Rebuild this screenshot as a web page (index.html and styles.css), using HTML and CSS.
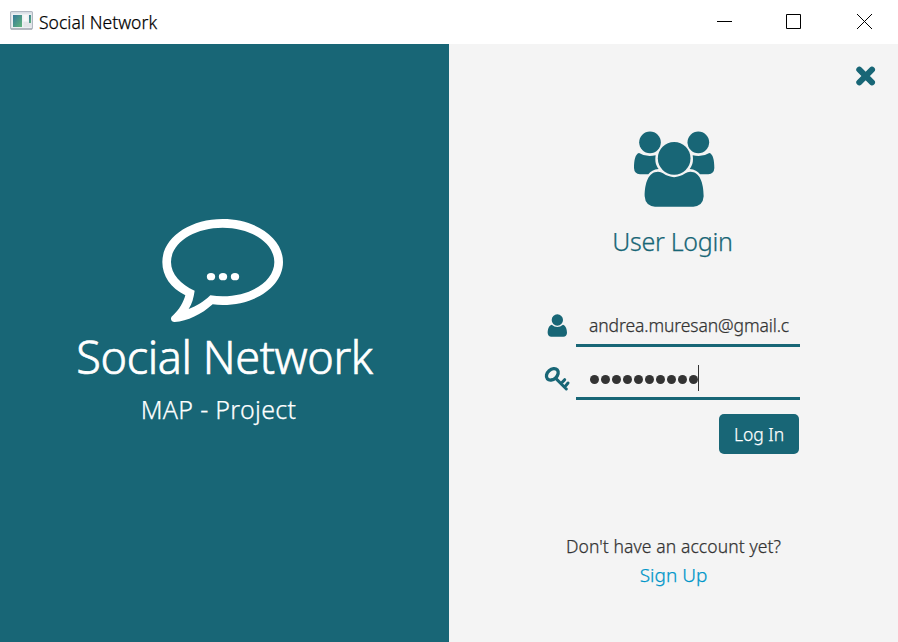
FILE: index.html
```html
<!DOCTYPE html>
<html lang="en">
<head>
<meta charset="utf-8">
<title>Social Network</title>
<link rel="stylesheet" href="styles.css">
</head>
<body>
<header class="titlebar">
  <svg class="app-icon" viewBox="0 0 23 19">
    <defs><linearGradient id="g" x1="0" y1="0" x2="1" y2="1"><stop offset="0" stop-color="#35789a"/><stop offset="1" stop-color="#62b57b"/></linearGradient></defs>
    <rect x=".6" y=".6" width="21.800" height="17.400" rx="1" fill="#edf0f3" stroke="#b2b8c2" stroke-width="1.200"/>
    <path d="M1 18h21" stroke="#9299a2"/>
    <path d="M1.500 2h20" stroke="#d3d9e2"/>
    <rect x="3" y="4" width="9" height="12" fill="url(#g)"/>
    <rect x="13.500" y="4" width="4" height="6" fill="#f8f8f8"/>
    <rect x="13.500" y="11" width="7.500" height="5" fill="#e3e5e8"/>
    <rect x="19" y="4" width="2" height="8" fill="url(#g)"/>
  </svg>
  <span class="window-title">Social Network</span>
  <svg class="controls" viewBox="0 0 198 44" fill="none" stroke="#000">
    <path d="M17 21.500h15M86.500 14.500h14v14h-14z"/>
    <path d="M157 14l15 15M172 14l-15 15"/>
  </svg>
</header>
<main class="content">
  <section class="brand">
    <svg class="bubble" viewBox="0 0 450 360" fill="#fff">
      <path fill-rule="evenodd" d="M218 27C318 27 399 84 399 156C399 228 318 285 218 285Q202 285 188 283C155 313 112 334 74 336C62 336 60 324 67 318C88 300 101 275 106 256C62 234 37 198 37 156C37 84 118 27 218 27ZM218 53C132 53 63 99 63 156C63 192 92 224 134 242C131 263 126 282 116 297C140 288 160 276 181 256C194 258 206 259 218 259C304 259 373 213 373 156C373 99 304 53 218 53Z"/>
      <ellipse cx="183" cy="200" rx="12.500" ry="11"/><ellipse cx="219" cy="200" rx="12.500" ry="11"/><ellipse cx="255" cy="200" rx="12.500" ry="11"/>
    </svg>
    <h1 class="name">Social Network</h1>
    <p class="subtitle">MAP - Project</p>
  </section>
  <section class="login">
    <svg class="close" viewBox="0 0 66 66"><path d="M14 15L50 51M50 15L14 51" stroke="#186676" stroke-width="14" stroke-linecap="square"/><path d="M13 14L51 52M51 14L13 52" stroke="#186676" stroke-width="18" stroke-linecap="round"/></svg>
    <svg class="group" viewBox="99 30 249 234" fill="#186676">
      <circle cx="150" cy="67" r="32.500"/><circle cx="295" cy="67" r="32.500"/><circle cx="222.500" cy="115" r="49"/>
      <path d="M117 99Q139 113 167 106C164 124 168 138 176 147C161 148 152 154 145 163H120Q103 162 102 144C102 120 106 102 117 99Z"/>
      <path d="M328 99Q306 113 278 106C281 124 277 138 269 147C284 148 293 154 300 163H325Q342 162 343 144C343 120 339 102 328 99Z"/>
      <path d="M174 155Q183 155 189 160Q222 183 256 160Q262 155 271 155C299 155 311 188 311 229Q309 258 280 260H165Q136 258 134 229C134 188 146 155 174 155Z"/>
    </svg>
    <h2 class="heading">User Login</h2>
    <form class="form">
      <div class="row">
        <svg class="field-icon" viewBox="24 33 84 84" fill="#186676"><circle cx="67" cy="60" r="17"/><path d="M50 74Q67 88 84 74C93 77 96 89 96 99Q95 110 85 110H49Q39 110 38 99C38 88 41 77 50 74Z"/></svg>
        <div class="field email">andrea.muresan@gmail.c</div>
      </div>
      <div class="row">
        <svg class="field-icon" viewBox="24 192 84 84" fill="none" stroke="#186676"><ellipse cx="52" cy="223" rx="20" ry="14.500" transform="rotate(-42 52 223)" stroke-width="10"/><path d="M63 236L94 267M79 250l10-11M90 260l9-11" stroke-width="9" stroke-linecap="round"/></svg>
        <div class="field password"><span class="dots"><i></i><i></i><i></i><i></i><i></i><i></i><i></i><i></i><i></i><i></i></span><span class="caret"></span></div>
      </div>
      <button class="submit" type="button">Log In</button>
    </form>
    <p class="question">Don't have an account yet?</p>
    <a class="signup">Sign Up</a>
  </section>
</main>
</body>
</html>
```
FILE: styles.css
```css
* { box-sizing: border-box; margin: 0; padding: 0; }
body { width: 898px; height: 642px; overflow: hidden; font-family: "Noto Sans", "Open Sans", sans-serif; font-weight: 350; -webkit-text-stroke: .25px currentColor; white-space: nowrap; background: #fff; }
svg { display: block; flex: none; }
.titlebar { height: 44px; display: flex; align-items: flex-start; }
.app-icon { width: 23px; height: 19px; margin: 11px 6px 0 10px; }
.window-title { font-size: 17.5px; line-height: 24px; letter-spacing: .05px; margin-top: 10px; color: #000; }
.controls { width: 198px; height: 44px; margin-left: auto; }
.content { display: flex; height: 598px; }
.brand { width: 449px; background: #186676; color: #fff; display: flex; flex-direction: column; align-items: center; padding-top: 166px; }
.bubble { width: 150px; height: 120px; }
.name { font-size: 45px; line-height: 60px; font-weight: 350; letter-spacing: -.4px; margin-top: -3px; -webkit-text-stroke-width: .7px; }
.subtitle { font-size: 25px; line-height: 34px; letter-spacing: .3px; margin: 5px 12px 0 0; }
.login { width: 449px; background: #f4f4f4; display: flex; flex-direction: column; align-items: center; color: #333; }
.close { width: 22px; height: 22px; align-self: flex-end; margin: 21px 21px 0 0; }
.group { width: 83px; height: 78px; margin: 43px 0 0 2px; }
.heading { font-size: 25px; line-height: 34px; font-weight: 350; letter-spacing: -.3px; color: #186676; margin: 16px 2px 0 0; }
.form { width: 257px; margin: 45px 4px 0 0; display: flex; flex-direction: column; }
.row { display: flex; height: 53px; }
.field-icon { width: 28px; height: 28px; margin-top: 8px; }
.field { width: 224px; height: 44px; margin-left: 5px; border-bottom: 3px solid #186676; padding-left: 13px; display: flex; align-items: center; }
.email { font-size: 17.5px; letter-spacing: -.1px; line-height: 42px; padding-top: 2px; }
.dots { display: flex; gap: 2px; margin: 6px 0 0 1px; }
.dots i { width: 9px; height: 9px; border-radius: 50%; background: #333; }
.caret { width: 1px; height: 26px; background: #333; margin-top: 3px; }
.submit { align-self: flex-end; width: 80px; height: 40px; border: 0; border-radius: 5px; background: #186676; color: #fff; font: 350 17.5px/38px "Noto Sans", sans-serif; margin: 5px 1px 0 0; }
.question { font-size: 17.5px; letter-spacing: .1px; line-height: 24px; margin-top: 80px; }
.signup { font-size: 19px; line-height: 26px; margin-top: 4px; color: #0096c9; }
```
